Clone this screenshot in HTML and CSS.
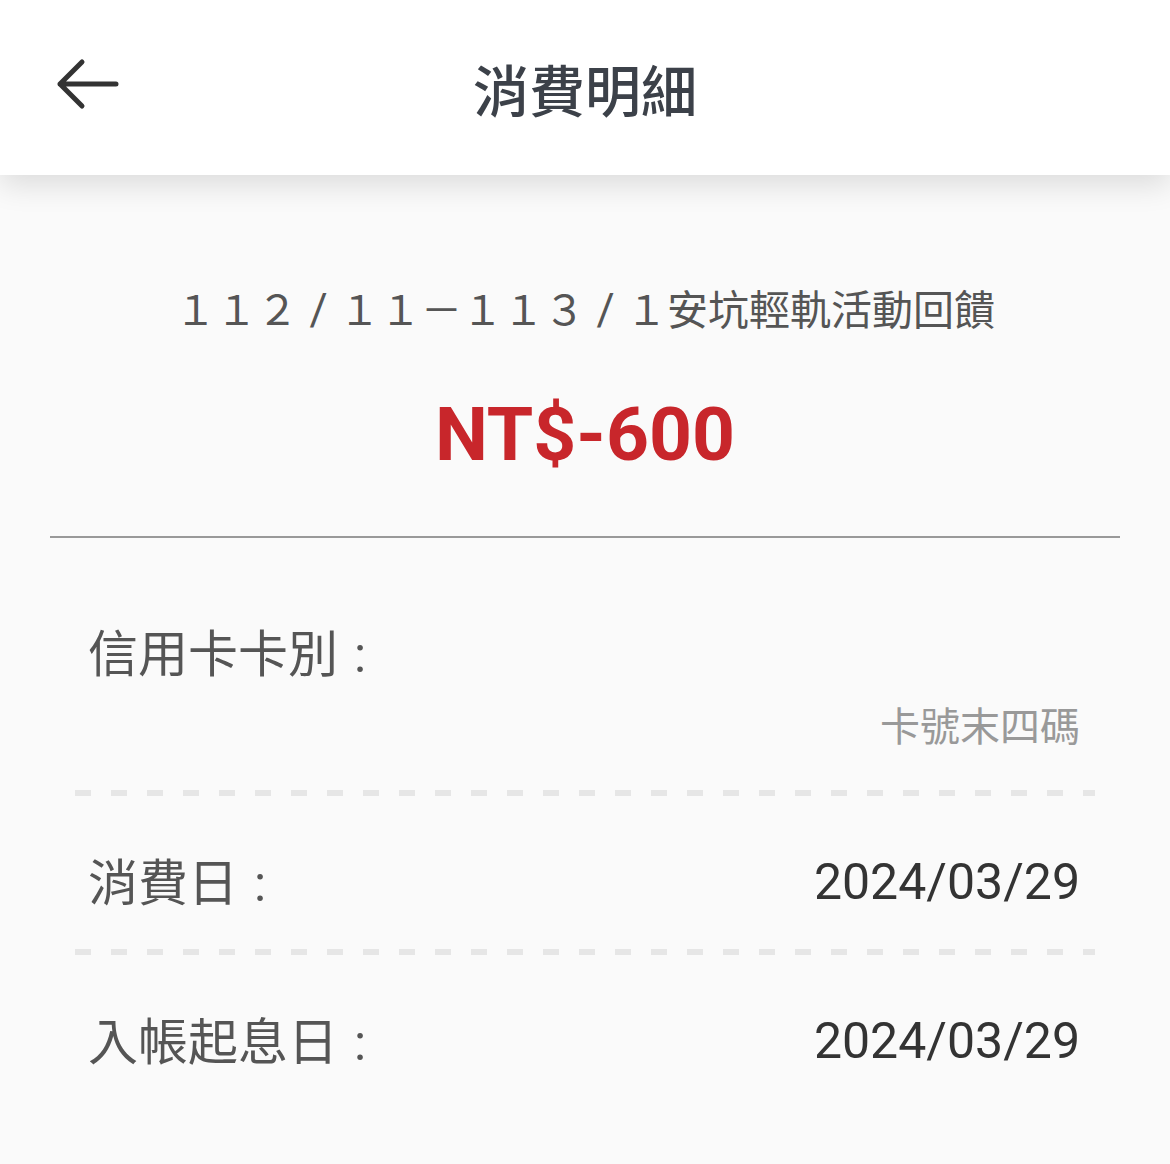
FILE: index.html
```html
<!DOCTYPE html>
<html lang="zh-Hant">
<head>
    <meta charset="UTF-8">
    <meta name="viewport" content="width=device-width, initial-scale=1.0">
    <title>消費明細</title>
    <link rel="stylesheet" href="styles.css">
</head>
<body>
    <header class="topbar">
        <button class="back" aria-label="返回">
            <svg width="64" height="52" viewBox="0 0 64 52">
                <path d="M26 4 L4 26 L26 48 M4 26 L60 26" fill="none" stroke="#333" stroke-width="5" stroke-linecap="round" stroke-linejoin="round"/>
            </svg>
        </button>
        <h1 class="title">消費明細</h1>
    </header>

    <main class="detail">
        <p class="desc">１１２<span class="slash">/</span>１１－１１３<span class="slash">/</span>１安坑輕軌活動回饋</p>
        <p class="amount">NT$-600</p>
        <div class="divider"></div>

        <div class="rows">
            <div class="row">
                <div class="line">
                    <span class="label">信用卡卡別<span class="colon">:</span></span>
                    <span class="value"></span>
                </div>
                <div class="sub">卡號末四碼</div>
            </div>
            <div class="dash"></div>
            <div class="row">
                <div class="line">
                    <span class="label">消費日<span class="colon">:</span></span>
                    <span class="value">2024/03/29</span>
                </div>
            </div>
            <div class="dash"></div>
            <div class="row">
                <div class="line">
                    <span class="label">入帳起息日<span class="colon">:</span></span>
                    <span class="value">2024/03/29</span>
                </div>
            </div>
        </div>
    </main>
</body>
</html>
```

FILE: styles.css
```css
body {
    margin: 0;
    background-color: #fafafa;
    font-family: "Noto Sans CJK TC", "Noto Sans", sans-serif;
    color: #555;
}

.topbar {
    position: relative;
    height: 175px;
    background: #fff;
    box-shadow: 0 10px 28px rgba(0, 0, 0, 0.12);
    display: flex;
    align-items: center;
    justify-content: center;
}

.back {
    position: absolute;
    left: 56px;
    top: 58px;
    padding: 0;
    border: none;
    background: none;
    cursor: pointer;
}

.back svg {
    display: block;
}

.title {
    margin: 0;
    font-size: 56px;
    font-weight: 500;
    color: #3c4149;
    line-height: 1;
}

.detail {
    padding-top: 102px;
}

.desc {
    margin: 0;
    height: 60px;
    text-align: center;
    font-size: 41px;
    line-height: 60px;
    color: #555;
}

.slash {
    display: inline-block;
    width: 41px;
    line-height: 1;
    text-align: center;
    font-family: Roboto, "Liberation Sans", sans-serif;
    font-size: 44px;
}

.amount {
    margin: 52px 0 0;
    text-align: center;
    font-family: Roboto, "Liberation Sans", sans-serif;
    font-weight: 700;
    font-size: 75px;
    line-height: 90px;
    color: #c8262b;
}

.divider {
    margin: 57px 50px 0;
    height: 2px;
    background: #999;
}

.rows {
    padding: 29px 0 40px;
}

.row {
    padding: 48px 90px 35px 88px;
}

.line {
    display: flex;
    justify-content: space-between;
    align-items: center;
    height: 70px;
}

.label {
    font-size: 50px;
    color: #555;
}

.colon {
    margin-left: 16px;
    font-family: Roboto, "Liberation Sans", sans-serif;
}

.value {
    padding-top: 6px;
    font-family: Roboto, "Liberation Sans", sans-serif;
    font-size: 50px;
    color: #333;
}

.sub {
    margin: 11px 0 3px;
    text-align: right;
    font-size: 40px;
    line-height: 56px;
    color: #999;
}

.dash {
    margin: 0 75px;
    height: 6px;
    background: repeating-linear-gradient(to right, #e6e6e6 0, #e6e6e6 16px, transparent 16px, transparent 36px);
}
```
